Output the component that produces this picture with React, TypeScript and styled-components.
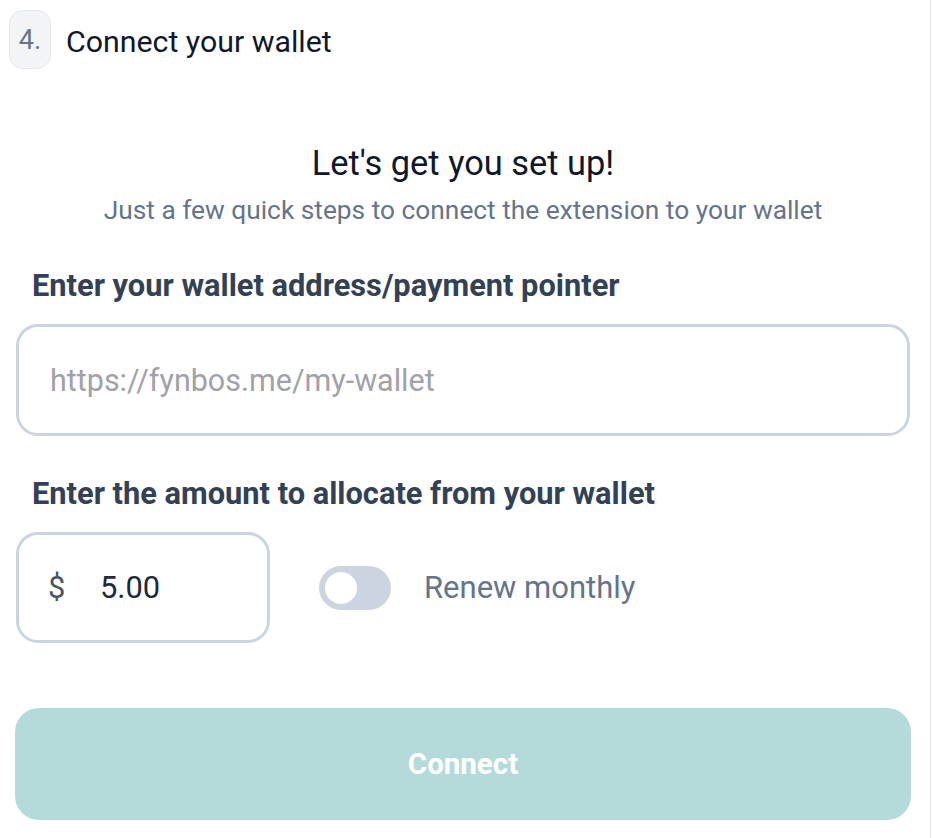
import React from "react";
import styled, { createGlobalStyle } from "styled-components";

const Global = createGlobalStyle`
  html, body { margin: 0; padding: 0; background: #ffffff; }
  body { font-family: "Roboto", "Liberation Sans", sans-serif; }
  * { box-sizing: border-box; }
`;

const Page = styled.div`
  width: 931px;
  min-height: 838px;
  border-right: 1px solid #e5e7eb;
  padding: 10px 20px 0 16px;
  display: flex;
  flex-direction: column;
`;

const Header = styled.div`
  display: flex;
  align-items: center;
  gap: 15px;
  margin-left: -7px;
`;

const StepBadge = styled.div`
  width: 42px;
  height: 59px;
  border-radius: 14px;
  background: #f3f4f6;
  border: 1.5px solid #e5e7eb;
  display: flex;
  align-items: center;
  justify-content: center;
  font-size: 27px;
  color: #64748b;
`;

const StepTitle = styled.h2`
  margin: 3px 0 0 0;
  font-size: 30.3px;
  font-weight: 400;
  color: #0f172a;
`;

const Intro = styled.div`
  display: flex;
  flex-direction: column;
  align-items: center;
  margin-top: 74px;
  gap: 12px;
`;

const Heading = styled.h1`
  margin: 0;
  font-size: 34.4px;
  font-weight: 400;
  color: #0f172a;
  line-height: 40px;
`;

const Sub = styled.p`
  margin: 0;
  font-size: 26.3px;
  color: #64748b;
  line-height: 30px;
`;

const Label = styled.label<{ $top: number }>`
  display: block;
  margin: ${(p) => p.$top}px 0 0 16px;
  font-size: 30.8px;
  font-weight: 700;
  color: #334155;
  line-height: 36px;
`;

const Field = styled.div<{ $width?: number }>`
  width: ${(p) => (p.$width ? `${p.$width}px` : "100%")};
  height: ${(p) => (p.$width ? 111 : 112)}px;
  border: 3px solid #cbd5e1;
  border-radius: 22px;
  display: flex;
  align-items: center;
  padding: 0 32px 0 31px;
  font-size: 30.8px;
  background: #fff;
`;

const TextInput = styled.input`
  border: none;
  outline: none;
  background: transparent;
  width: 100%;
  padding: 0;
  font-family: inherit;
  font-size: 30.5px;
  color: #0f172a;
  &::placeholder { color: #a1a1aa; }
`;

const InputWrap = styled.div`
  margin-top: 20px;
`;

const AmountRow = styled.div`
  display: flex;
  align-items: center;
  margin-top: 20px;
`;

const Currency = styled.span`
  color: #475569;
  width: 52px;
  margin-left: -2px;
`;

const AmountValue = styled.span`
  color: #1e293b;
`;

const Toggle = styled.div`
  width: 72px;
  height: 44px;
  border-radius: 22px;
  background: #cbd5e1;
  margin-left: 49px;
  padding: 6px;
  display: flex;
  align-items: center;
`;

const Knob = styled.div`
  width: 32px;
  height: 32px;
  border-radius: 50%;
  background: #ffffff;
`;

const ToggleLabel = styled.span`
  margin-left: 33px;
  font-size: 31px;
  color: #64748b;
`;

const ConnectButton = styled.button`
  margin-top: 65px;
  margin-left: -1px;
  width: 896px;
  height: 112px;
  border: none;
  border-radius: 24px;
  background: #b4dbda;
  color: #ffffff;
  font-family: inherit;
  font-size: 29.5px;
  font-weight: 700;
`;

export default function App() {
  return (
    <>
      <Global />
      <Page>
        <Header>
          <StepBadge>4.</StepBadge>
          <StepTitle>Connect your wallet</StepTitle>
        </Header>
        <Intro>
          <Heading>Let's get you set up!</Heading>
          <Sub>Just a few quick steps to connect the extension to your wallet</Sub>
        </Intro>
        <Label $top={43}>Enter your wallet address/payment pointer</Label>
        <InputWrap>
          <Field>
            <TextInput placeholder="https://fynbos.me/my-wallet" />
          </Field>
        </InputWrap>
        <Label $top={40}>Enter the amount to allocate from your wallet</Label>
        <AmountRow>
          <Field $width={254}>
            <Currency>$</Currency>
            <AmountValue>5.00</AmountValue>
          </Field>
          <Toggle>
            <Knob />
          </Toggle>
          <ToggleLabel>Renew monthly</ToggleLabel>
        </AmountRow>
        <ConnectButton>Connect</ConnectButton>
      </Page>
    </>
  );
}
